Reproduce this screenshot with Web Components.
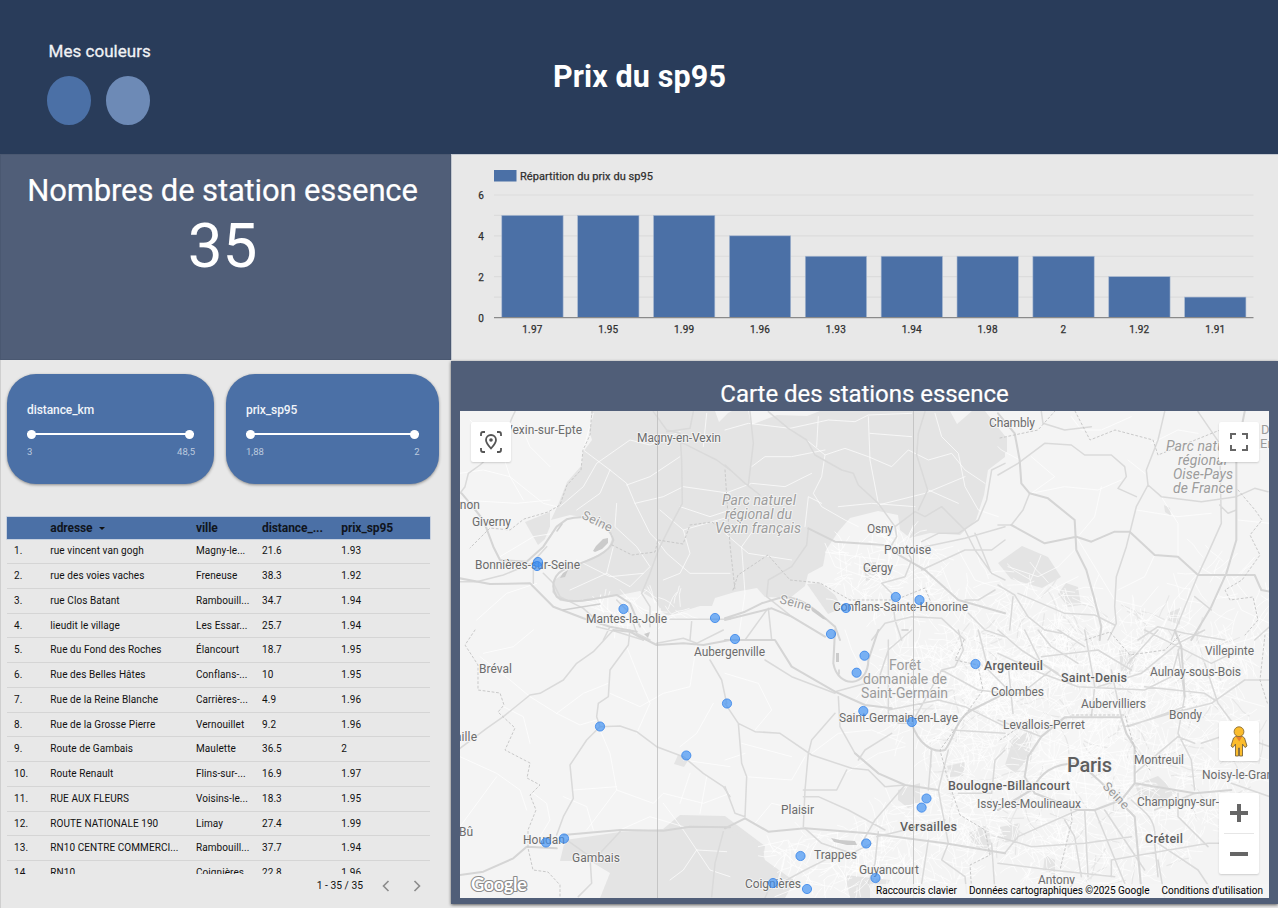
<!DOCTYPE html>
<html lang="fr">
<head>
<meta charset="utf-8">
<title>Prix du sp95</title>
<style>
html,body{margin:0;height:100%;overflow:hidden;background:#e8e8e8;font-family:Roboto,"Liberation Sans",sans-serif}
</style>
</head>
<body>
<fuel-dashboard></fuel-dashboard>
<script>
const define=(name,html)=>customElements.define(name,class extends HTMLElement{
  constructor(){super();this.attachShadow({mode:'open'});}
  connectedCallback(){
    const t=document.createElement('template');
    t.innerHTML=typeof html==='function'?html(this):html;
    this.shadowRoot.replaceChildren(t.content.cloneNode(true));
  }
});
const label=([s,x0,x1,y,size=12,weight=400,fill='#6c6c6c',extra=''])=>
  `<text x="${x0}" y="${y}" textLength="${x1-x0}" font-size="${size}" font-weight="${weight}" fill="${fill}" ${extra}>${s}</text>`;

define('color-swatch',el=>`<style>:host{display:block;width:44.5px;height:49px;border-radius:50%;background:${el.getAttribute('color')}}</style>`);

define('page-header',`<style>
:host{display:grid;grid-template-columns:1fr auto 1fr;height:154px;background:#293c5a;color:#fff}
.left{padding:41px 0 0 46.5px}
.cap{font-size:17px;line-height:20px;padding-left:2px;font-weight:400;-webkit-text-stroke:.3px;color:#f0f2f5;letter-spacing:.04px;white-space:nowrap}
.row{display:flex;gap:14.5px;margin-top:15px}
h1{margin:0;align-self:start;padding:58px 0 0 1px;font-size:30.500px;line-height:37px;font-weight:700;letter-spacing:.12px}
</style>
<div class="left"><div class="cap">Mes couleurs</div><div class="row"><color-swatch color="#4b70a6"></color-swatch><color-swatch color="#6d8ab6"></color-swatch></div></div>
<h1><slot></slot></h1><div></div>`);

define('score-card',el=>`<style>
:host{display:block;box-sizing:border-box;background:#505e78;color:#fff;text-align:center;border:1px solid #4a5871;padding:17px 6px 0 0}
.t{font-size:31px;line-height:38px;white-space:nowrap;letter-spacing:-.14px;-webkit-text-stroke:.2px}
.v{font-size:62px;line-height:72px}
</style><div class="t"><slot></slot></div><div class="v">${el.getAttribute('value')}</div>`);

define('bar-chart',()=>{
  const data=[['1.97',5],['1.95',5],['1.99',5],['1.96',4],['1.93',3],['1.94',3],['1.98',3],['2',3],['1.92',2],['1.91',1]];
  let s='';
  for(let i=1;i<=6;i++)s+=`<path d="M494 ${317.5-i*20.42}H1253.5" stroke="#dcdcdc" stroke-width="1.2"/>`;
  data.forEach(([n,v],i)=>{
    const x=501.8+i*75.87;
    s+=`<rect x="${x}" y="${317.5-v*20.42}" width="61.3" height="${v*20.42}" fill="#4b70a6" stroke="#a9b9d1" stroke-width=".6"/>`;
    s+=`<text x="${x+30.6}" y="332.7" text-anchor="middle" font-size="10" letter-spacing=".15">${n}</text>`;
  });
  [0,2,4,6].forEach(v=>s+=`<text x="481" y="${321.5-v*20.42}" text-anchor="middle" font-size="10">${v}</text>`);
  return `<style>:host{display:block;background:#e8e8e8;border-left:1px solid #c3c8d0;border-top:1px solid #c3c8d0;box-sizing:border-box}svg{display:block;width:826px;height:205px}text{stroke:#303030;stroke-width:.25px}</style>
  <svg viewBox="452 155 826 205" fill="#303030">${s}
  <path d="M494 317.7H1253.5" stroke="#8a8a8a" stroke-width="1.2"/>
  <rect x="494" y="170" width="22.5" height="11.5" fill="#4b70a6"/>${label(['Répartition du prix du sp95',520,653,179.5,11,400,'#303030'])}</svg>`;
});

define('range-filter',el=>`<style>
:host{display:block;box-sizing:border-box;height:110px;border-radius:29px;background:#4b70a6;padding:27px 20px 0;box-shadow:0 1px 3px rgba(0,0,0,.4);color:#f1f4f9}
.n{font-size:12px;line-height:18px;font-weight:500;letter-spacing:-.08px}
.track{display:flex;align-items:center;justify-content:space-between;height:10px;margin-top:10px;background:linear-gradient(#fff,#fff) 0 50%/100% 2px no-repeat}
i{width:9px;height:9px;border-radius:50%;background:#fff}
.v{display:flex;justify-content:space-between;font-size:9.500px;line-height:12px;margin-top:7px;margin-right:-1px;color:#bccadf}
</style><div class="n">${el.getAttribute('name')}</div><div class="track"><i></i><i></i></div><div class="v"><span>${el.getAttribute('min')}</span><span>${el.getAttribute('max')}</span></div>`);

define('station-table',()=>{
  const rows=[['rue vincent van gogh','Magny-le...','21.6','1.93'],['rue des voies vaches','Freneuse','38.3','1.92'],['rue Clos Batant','Rambouill...','34.7','1.94'],['lieudit le village','Les Essar...','25.7','1.94'],['Rue du Fond des Roches','Élancourt','18.7','1.95'],['Rue des Belles Hâtes','Conflans-...','10','1.95'],['Rue de la Reine Blanche','Carrières-...','4.9','1.96'],['Rue de la Grosse Pierre','Vernouillet','9.2','1.96'],['Route de Gambais','Maulette','36.5','2'],['Route Renault','Flins-sur-...','16.9','1.97'],['RUE AUX FLEURS','Voisins-le...','18.3','1.95'],['ROUTE NATIONALE 190','Limay','27.4','1.99'],['RN10 CENTRE COMMERCI...','Rambouill...','37.7','1.94'],['RN10','Coignières','22.8','1.96']];
  return `<style>
:host{display:block;width:423px;color:#111}
.r,.h{display:grid;grid-template-columns:43.3px 145.7px 66px 79.3px 1fr;box-sizing:border-box;white-space:nowrap}
.h{height:22px;background:#4b70a6;font-weight:700;font-size:12px;line-height:22px;box-shadow:0 0 0 .7px #b9c6da;color:#10151d;letter-spacing:-.08px}
.r{height:24.75px;border-bottom:1.3px solid #d5d5d5;font-size:10px;line-height:24px;letter-spacing:.08px}
.r span:first-child{padding-left:7px}
.body{height:334.500px;overflow:hidden;padding-top:.3px}
.foot{display:flex;justify-content:flex-end;align-items:center;font-size:10.3px;line-height:22px;height:22px;padding:1px 7px 0 0}
svg{width:12px;height:12px;fill:none;stroke:#8b8b8b;stroke-width:1.6}
b{display:inline-block;border:3px solid transparent;border-top-color:#111;border-bottom:0;vertical-align:2.5px;margin-left:6px}
</style><div class="h"><span></span><span>adresse<b></b></span><span>ville</span><span>distance_...</span><span>prix_sp95</span></div>
<div class="body">${rows.map((r,i)=>`<div class="r"><span>${i+1}.</span>${r.map(c=>`<span>${c}</span>`).join('')}</div>`).join('')}</div>
<div class="foot"><span>1 - 35 / 35</span><svg style="margin-left:17px" viewBox="0 0 12 12"><path d="M8.5 1 3.500 6l5 5"/></svg><svg style="margin-left:19px" viewBox="0 0 12 12"><path d="M3.500 1 8.500 6l-5 5"/></svg></div>`;
});

define('map-button','<style>:host{display:flex;align-items:center;justify-content:center;width:40px;height:40px;background:#fff;border-radius:2px;box-shadow:0 1px 2px rgba(0,0,0,.16)}</style><slot></slot>');

define('base-map',()=>{
  /* Each road sheet is traced at three times the map scale. */
  const sheets=[
   [450,360,
    'M195 155C170 200 170 240 150 260L90 315 55 340 45 380 30 400M30 665 80 665 160 645 245 610 290 560M250 625V670M280 640 310 670 330 710 400 745 450 790M610 155 650 210 690 220 695 300 697 430 660 500 625 570 600 640 575 700 600 740V800M650 215 720 205 730 155M690 245 760 280 800 300 840 330M660 778H840M440 800 500 815 580 840M500 720 540 760 560 820 600 840M720 840 725 785M460 840 480 800',
    'M35 400 60 430 100 480 130 560 150 600 230 605 280 560 320 500 350 478C430 455 480 500 490 540C480 580 420 600 350 625C310 640 300 680 320 710C350 735 420 720 500 705L540 730 570 800M30 655 120 672 240 670 310 740 400 775 480 800 560 815',
    'M400 270 480 330 530 370 555 430 600 520 620 540M330 440 400 380 440 310 540 240 600 255 690 215M400 270 430 160M480 330 450 400 380 450M530 375 600 350 690 290M555 430 640 410 700 380 840 400M500 430 495 500 560 560 600 620 540 680 470 640 360 690M630 450 700 510 720 580 690 640 640 660M700 510 840 470M30 340 100 330 180 350 280 430 320 440M150 260 180 350 220 420M30 420 200 430 300 420M150 590 250 530 310 520M210 190 240 260 300 320M60 180 130 250M620 540 650 580 720 640 840 640M690 440 780 470 840 450M380 600 480 650 580 640M770 160 760 260M470 640 490 560M80 780 170 700 260 670'],
   [725,360,
    'M0 315 60 370 105 405M75 155 85 250 70 375M130 155 190 205 245 240 270 285 350 330 385 340 400 375 460 430 510 500 515 530 500 555M600 155 580 220 575 285 608 390 580 450M510 500 570 455 600 470 650 440 720 510 750 570 800 640 840 660M840 310 800 330 785 420 760 480 700 520 640 520 590 545M250 505 245 555 200 620 130 660 125 710 200 770M130 745 140 840M60 840 125 750M600 560 720 535 840 500M540 560 560 600 540 650 470 670 500 700 510 780 530 840M440 840 480 790 560 770 650 775 720 840M730 760 780 810 840 830M720 720 760 720 810 690M590 630 720 570 800 570 840 540M750 520 795 630',
    'M0 775 60 755 110 730 160 715C230 700 280 760 330 800L345 840M0 780 140 745 200 770 300 830M250 505 330 545 480 555 530 590 600 630 700 720 840 760',
    'M0 210 70 190 195 205 310 180 390 185 430 165 560 160M245 240 300 285 360 265 430 290 500 320 550 270 610 300 680 280 720 330 780 370M300 285 290 350 265 400 290 440 360 480 400 500M430 170 435 300 460 430M280 170 275 260M0 400 80 370 180 380 260 340M80 320 120 290 200 290 300 270M435 220 560 230M630 160 650 230 700 280 720 380 760 450 820 470M460 435 600 400 720 350M340 440 440 430 570 440M610 390 700 430M40 840 60 700 50 560 100 490M240 500 250 410 290 430M0 520 70 580 200 600M300 550 330 620 420 650 500 680M340 545 350 650 450 740M320 580 480 600M650 620 690 720M700 570 750 660 840 690'],
   [998,360,
    'M0 345 60 310 140 250 220 255 260 285 340 285 380 320 385 350 360 385 415 410M130 155 135 190 200 210 280 200M500 155 480 240 445 330 450 375 415 440 395 520 385 560 355 650 350 740 355 790 330 840M450 375 490 410 610 425 715 410 770 385 810 395M0 495H40L75 450 95 400M600 155 665 250 670 490 630 580 600 645 520 840M0 675 50 705 90 770 140 810 190 820M60 700 200 760 290 765 350 795M420 840 480 800 560 820 680 840M665 435 690 460 715 450M45 710 35 810M770 840 815 800M590 710 640 750',
    'M0 160 50 220 65 300 70 370 95 400 150 415 230 480 235 570 265 630 290 720 310 800 305 840M40 495 140 550 235 530 280 545 350 515 395 515 470 585 540 590 600 645 770 645 790 690 815 695M740 155 715 280V540L685 640 640 740 580 840',
    'M220 170 250 210 310 210 400 170M100 400 200 380 300 390 370 360M65 300 10 270 0 260M310 380 290 470 240 530M415 450 540 470 640 460M460 250 540 210 600 220M490 410 540 490 540 590M230 570 180 620 120 650 30 620M235 530 290 620 350 720 430 740 480 680M470 585 440 650 360 690M720 480 815 490M600 640 530 720 480 840M240 650 160 690 100 730M680 640 730 750 815 790M390 300 440 340M100 290 170 350 100 400M715 290 815 260M660 260 715 290'],
   [450,630,
    'M490 0 430 65 380 100 340 150 270 190 240 195 160 260 110 295 30 355M540 0 535 45 480 120 475 200 445 220 440 260 450 290 410 330 360 405 370 505 340 560 320 615M450 290 510 288 560 305 620 350 700 380 760 430 820 470 840 500M780 90 815 150 830 220M350 630 420 680 425 760 385 800M440 680 510 605M820 605 795 700 785 800M540 5 580 30M620 40 700 25 740 40 820 0',
    'M490 0 540 5 620 45 700 40 760 45 840 30M30 735 100 725 190 685 230 650 320 655M340 615 510 600 640 602 720 590 840 592',
    'M100 70 190 50 250 0M90 80 180 150 240 200 320 250 390 285 440 270M320 250 400 190 475 160M530 50 570 150 600 220 560 310M480 190 570 230 640 190 720 170 740 40M30 380 140 430 210 480 230 540M30 590 140 440M450 300 480 370 500 480 610 520 640 490 760 520 840 490M370 480 500 470M500 480 410 600M240 340 220 260 160 230M250 490 290 520 300 570 270 620M640 520 700 600 740 660 830 665M740 660 700 720 660 750M740 660 780 720 840 740M510 600 600 560 700 590M690 350 740 310 790 220M700 390 840 410M770 440 750 550M720 430 690 520M340 500 410 530 430 600'],
   [725,630,
    'M120 90 200 140 330 190M340 200 345 290 390 370 460 430M0 220 40 280 90 305 165 310 260 375 380 415 430 420 480 470 540 465M330 250 260 330 250 370 240 480 235 590M235 480H335L365 420M235 500H280L370 540 480 600M40 280 50 400 65 440 60 560M0 470 30 550 60 560M540 465 450 570 410 640M240 595 290 640 380 670 440 640M490 30V250L520 280H560L650 120M670 360 640 480 670 640M620 360 610 480M680 300 840 310M700 0 715 60 690 110 650 120M760 0 790 120 840 170M670 640 650 690 720 740 725 790M400 390 420 360 500 310M120 804 130 780 240 720 340 670M330 185 460 150 490 60 560 0M490 240 640 210 720 230 840 290M650 120 760 180 840 190M460 605 450 700 430 760M610 630 590 760M800 640 810 790M840 360 810 390 800 490 700 490M455 620 540 600 660 570',
    'M0 30H150L200 110 330 185 420 225 500 235M390 370 460 430 540 465 640 480M0 595 60 565 130 605 240 595 430 610 660 640 840 670M560 280C580 340 620 370 660 360C690 320 690 270 740 240L840 190M330 0 325 100C340 180 430 170 430 90L460 0',
    'M0 130 100 160 140 240 90 300M60 440 200 450 240 380M50 340 200 380M0 390 60 370M360 0 380 60 420 140 480 150M260 370 340 310 440 300 540 340M360 430 460 370 540 350M90 580 140 520 230 540M100 650 190 630 230 700 200 760M150 800 250 760 320 770M480 470 500 520 580 590M540 560 700 550 840 560M630 480 740 530 840 500M610 90 710 160 820 110M700 130 740 60 840 50M490 730 600 680 690 700M540 610 560 700 500 790'],
   [998,630,
    'M0 70 130 130 240 170 440 180 520 140 545 50M260 0 290 170 280 262M340 120 370 262M380 290 520 250 640 220 740 150 815 150M440 0 540 50 640 100 700 70M300 170 430 130 540 40 620 0M540 60 560 200 540 310 580 390 590 480M410 430 540 320 590 340M390 290 560 230M400 510C430 540 480 560 470 640L480 740M260 540 270 740M290 540 380 760M320 540 440 720M240 540 60 620 20 670M0 620 100 650 260 640 400 620M340 690 630 640 700 640M480 640 600 720 640 780M0 0 70 60 180 130M80 0 130 100 220 160M30 100 45 250M0 190 70 190 160 120M130 80 300 60 400 120M390 100 480 0M620 100 660 220 720 300M610 340 700 310 815 350M120 0 160 50 240 100M250 740 230 620 200 570M0 700 160 720 350 740M470 540 590 490M0 270 130 320M440 170 620 190 650 210M180 0 260 50M540 490 540 560 630 650M700 460 815 500M340 740 340 690M480 690 500 804',
    'M200 262H370L385 310 410 350V460L370 510 290 540H240L110 490 80 440 90 380 130 320 200 262M430 780 410 560C350 500 300 440 240 400C160 400 130 430 100 480L0 540M410 460 590 490 700 480M530 0 550 50 560 200',
    'M130 320 400 420M240 270 270 540M90 400 400 360M160 500 380 310M310 270 330 520M120 440 400 480M480 60 620 180 800 230M600 50 600 250M440 220 520 400 700 430M640 60 780 20M440 100 420 250']];
  const road=(k,c,w,o=1)=>sheets.map(s=>`<g transform="translate(${s[0]} ${s[1]}) scale(.33333)" opacity="${o}"><path d="${s[k]}" stroke="${c}" stroke-width="${w}"/></g>`).join('');
  /* Dense residential streets, seeded so that every load is the same. */
  let seed=7;const rnd=()=>(seed=(seed*16807)%2147483647)/2147483647;
  const net=(cx,cy,rx,ry,n,len)=>{let d='';for(let i=0;i<n;i++){const a=rnd()*6.283,q=Math.sqrt(rnd());let x=cx+Math.cos(a)*rx*q,y=cy+Math.sin(a)*ry*q,t=rnd()*6.283;d+=`M${x.toFixed(1)} ${y.toFixed(1)}`;for(let j=0;j<3;j++){t+=(rnd()-.5)*.7;x+=Math.cos(t)*len;y+=Math.sin(t)*len;d+=`L${x.toFixed(1)} ${y.toFixed(1)}`}}return d};
  const grey=net(1090,740,180,150,130,8);
  const streets=net(1090,760,165,125,1200,6)+net(1090,665,160,55,450,6)+net(890,575,60,45,140,6)+net(940,690,75,60,190,7)+net(840,860,70,30,130,6)+net(930,840,70,50,130,6)+net(640,612,45,14,45,6)+net(1220,620,60,70,70,8)+net(1020,610,80,40,80,9);
  const G='#9c9c9c',D='#5f5f5f';
  const names=[['Vexin-sur-Epte',505,582,434],['Magny-en-Vexin',637,721,442],['Vernon',442,480,509],['Giverny',472,511,526],['Bonnières-sur-Seine',475,580,569],['Mantes-la-Jolie',586,667,623],
  ['Parc naturel',722,796,504.7,14,400,G,'font-style="italic"'],['régional du',725,792,518.7,14,400,G,'font-style="italic"'],['Vexin français',715,801,532.7,14,400,G,'font-style="italic"'],
  ['Osny',867,893,533],['Pontoise',884,931,554],['Cergy',863,893,572],['Conflans-Sainte-Honorine',833,968,611],['Chambly',989,1035,427],
  ['Parc naturel',1166,1240,451,14,400,G,'font-style="italic"'],['régional',1178,1227,465,14,400,G,'font-style="italic"'],['Oise-Pays',1173,1233,479,14,400,G,'font-style="italic"'],['de France',1173,1233,493,14,400,G,'font-style="italic"'],
  ['D',1261,1270,434,13,400,G],['Er',1260,1272,448,13,400,G],
  ['Bréval',479,512,673],['aille',455,477,741],['Bû',459,473,836],['Houdan',523,565,844],['Gambais',572,620,862],['Aubergenville',694,765,656],
  ['Forêt',889,921,670,14,400,G],['domaniale de',863,947,684,14,400,G],['Saint-Germain',861,948,698,14,400,G],['Saint-Germain-en-Laye',839,958,722],
  ['Plaisir',781,814,814],['Versailles',900,957,830.5,12.5,500,D],['Trappes',814,857,858.5],['Guyancourt',859,919,874],['Coignières',745,801,888],
  ['Argenteuil',984,1043,670,12.5,500,D],['Colombes',991,1044,696],['Saint-Denis',1061,1127,682,12.5,500,D],['Aubervilliers',1081,1146,708],['Bondy',1169,1202,719],['Villepinte',1205,1254,655],['Aulnay-sous-Bois',1150,1241,676],['Levallois-Perret',1003,1085,729],['Paris',1067,1112,772,20,500,D],['Montreuil',1134,1184,764],['Boulogne-Billancourt',948,1070,789.5,12.5,500,D],['Noisy-le-Grand',1202,1280,779],['Issy-les-Moulineaux',977,1081,808],['Champigny-sur-',1137,1219,806],['Créteil',1145,1183,843,12.5,500,D],['Antony',1038,1075,884]];
  const river=(x,y,r)=>`<text transform="translate(${x} ${y}) rotate(${r})" font-size="12.500" textLength="32" fill="#9a9a9a">Seine</text>`;
  const dots=[[538,562],[537,566],[623.5,609],[715,618],[735,639],[727,703.5],[600,726.5],[686.3,755.5],[546,842.5],[564,838.5],[831,634],[846,608],[895.8,597],[919.5,600],[864.5,655.7],[856.6,672.7],[975.5,664],[863.3,711],[911.8,722],[926.5,798.5],[921.6,807.6],[866.2,843.5],[800.5,856],[773,883],[807,889],[875.5,878]];
  return `<style>:host{display:block}svg{display:block;width:809px;height:487px}</style>
<svg viewBox="460 411 809 487"><rect x="460" y="411" width="809" height="487" fill="#f4f4f4"/>
<g fill="#e4e4e4">
<path d="M592 411 589 430 592 440 583 452 582 465 567 482 558 505 551 520 570 515 600 520 613 535 608 550 570 568 555 580 552 592 560 601 582 602 615 596 640 591 655 600 662 612 668 616 700 606 712 606 715 598 735 592 757 588 765 597 790 598 805 586 808 574 823 566 826 550 838 532 850 518 878 511 898 515 900 530 910 538 930 533 960 535 976 520 984 495 988 470 1005 457 1005 436 985 411Z"/>
<path d="M748 411 751 425 777 415 807 416 820 411Z" fill="#f4f4f4"/><path d="M715 411 719 422 728 413 732 411Z" fill="#f4f4f4"/><path d="M525 522 550 512 550 535 538 545Z"/><path d="M950 411 957 424 972 411Z" fill="#f4f4f4"/>
<path d="M551 524 566 517 592 519 606 530 609 540 600 548 575 562 552 574 541 567 538 556Z" fill="#f4f4f4"/>
<path d="M565 840 620 832 663 829 680 815 725 816 765 846 762 868 795 880 785 898H600L610 873 590 861 560 861Z"/>
<path d="M725 828 760 844 765 860 790 878 783 898H725Z"/>
<path d="M998 563 1022 546 1048 557 1061 577 1042 588 1011 579Z"/><path d="M1066 583 1078 587 1081 605 1068 607 1058 594Z"/><path d="M1164 505 1170 508 1171 516 1165 512Z"/><path d="M998 437H1007V452L998 457Z"/><path d="M807 584 820 583 835 595 842 608 828 614Z"/>
<path d="M1013 740 1035 728 1027 760 1015 773 1005 765Z"/><path d="M1135 785 1158 776 1176 793 1160 803 1140 798Z"/><path d="M898 790 920 783 920 803 908 808 898 800Z"/><path d="M1000 827 1020 823 1017 840 1003 843ZM947 766 965 762 963 776 950 777ZM968 833 988 824 993 855 975 844ZM863 563 876 562 878 577 866 581ZM1119 650 1138 652 1130 675 1121 671ZM845 875 890 880 880 898H850ZM1045 855 1055 860 1055 875 1043 870ZM1168 613 1180 608 1180 625 1167 620ZM678 755 689 759 684 767 674 764Z"/>
<path d="M1025 760 1070 717H1122L1135 745V785L1095 810H1078Z" fill="#f6f6f6"/></g>
<g fill="none" stroke-linejoin="round" stroke-linecap="round">
<path d="${grey}" stroke="#e7e7e7" stroke-width="1.2"/>
<path d="${streets}" stroke="#fff" stroke-width=".9" opacity=".75"/>
${road(4,'#fff',3,.7)}${road(2,'#dadada',4.6)}${road(3,'#d5d5d5',6.2)}
<g stroke="#c9c9c9" stroke-dasharray="2 2.500" stroke-width="1"><path d="M592 411 590 435 583 450 581 470 567 485 560 505 548 512 524 519 510 530 490 528 470 548M612 545 632 555 655 552 658 540 683 544 690 525 712 522 720 528M475 630 465 645 478 665 478 690 500 693 504 705 498 712 515 728 505 750 530 763 527 778 540 785 530 795 536 810 528 830 528 848 533 870 548 872 560 885V898M733 590 738 575 768 555 790 580 820 583 850 600 895 600 925 588 932 605M725 470 730 545 735 590M1000 438 1038 430 1055 411M1075 411 1090 440 1115 430 1153 440 1158 455 1220 430M1238 490 1255 510 1262 520 1250 535 1260 555 1242 580 1225 590 1230 600 1253 597 1258 620 1245 635M1085 640 1110 632 1130 655 1165 650 1180 635M964 640 955 660 978 665 983 690 940 750 948 780 960 815 985 830 990 855 970 865 972 895M1265 635 1260 680 1268 705M1072 715H1125L1135 750 1150 770M1000 740 1030 720M1070 800 1072 820 1060 870"/></g>
<g fill="#cbcbcb"><path d="M593 551 596 546 603 539 608 538 608 543 602 549 595 552ZM560 578 563 573 568 570 565 577ZM810 606 819 612 827 620 823 619 812 611ZM831 838 840 840 855 841 857 845 847 845 834 842ZM644 634 650 632 648 638ZM836 653H839V662H836Z"/></g><path d="M563 610 600 604M557 531 562 524M839 670V674M902 630H908" stroke="#d0d0d0" stroke-width="1.500"/>
</g>
<g stroke="#f6f6f6" stroke-width="2" stroke-opacity=".8" paint-order="stroke" stroke-linejoin="round">${names.map(label).join('')}${river(581,518,26)}${river(779,603,15)}${river(1102,787,46)}</g>
<path d="M657.500 411V898M913.500 411V898" stroke="#bcbcbc" stroke-width=".8"/>
<g fill="#3d8ff2" fill-opacity=".68" stroke="#2f7fe8" stroke-opacity=".75">${dots.map(d=>`<circle cx="${d[0]}" cy="${d[1]}" r="4.600"/>`).join('')}</g>
<rect x="870" y="884" width="399" height="14" fill="#f5f5f5" opacity=".75"/>
${label(['Raccourcis clavier',876,957,893.7,10,400,'#000'])}${label(['Données cartographiques ©2025 Google',969,1149.5,893.7,10,400,'#000'])}${label(["Conditions d'utilisation",1161.5,1263,893.7,10,400,'#000'])}
<text x="471" y="890.500" font-size="18.500" font-family="Lato,sans-serif" font-weight="700" textLength="56" fill="#fff" stroke="#8b8b8b" stroke-width="2.200" paint-order="stroke" stroke-linejoin="round">Google</text>
</svg>`;
});

define('station-map',`<style>
:host{display:block;box-sizing:border-box;background:#505e78;height:543px;padding:18px 9px 0;margin-top:1px;box-shadow:0 1px 3px rgba(0,0,0,.6)}
h2{margin:0;height:32px;font-size:24px;line-height:30px;font-weight:400;color:#fff;text-align:center;letter-spacing:-.05px;-webkit-text-stroke:.2px}
.map{position:relative;width:809px;height:487px;overflow:hidden}
map-button{position:absolute}
.locate{left:11px;top:11px}.full{right:10.500px;top:11px}.peg{right:10.500px;top:310px}
.zoom{right:10.500px;top:382px;width:40px;height:81px}
svg{display:block}
</style><h2><slot></slot></h2><div class="map"><base-map></base-map>
<map-button class="locate"><svg width="24" height="24" viewBox="0 0 24 24" fill="none" stroke="#555" stroke-width="1.800"><path d="M2 6V4Q2 2 4 2H6M18 2H20Q22 2 22 4V6M22 18V20Q22 22 20 22H18M6 22H4Q2 22 2 20V18"/><path d="M12 18.500C8.500 14.700 7 12.500 7 10A5 5 0 0 1 17 10C17 12.500 15.500 14.700 12 18.500Z"/><circle cx="12" cy="10" r="1.800" fill="#555" stroke="none"/></svg></map-button>
<map-button class="full"><svg width="18" height="18" viewBox="0 0 18 18" fill="none" stroke="#666" stroke-width="2"><path d="M1 6V1H6M12 1H17V6M17 12V17H12M6 17H1V12"/></svg></map-button>
<map-button class="peg"><svg width="18" height="31" viewBox="0 0 18 31"><path d="M5.500 10.500 3.500 12 1 20 3 21.500 5.500 18V30H8.500V22H9.500V30H12.500V18L15 21.500 17 20 14.500 12 12.500 10.500Z" fill="#fbbc2c" stroke="#79643c" stroke-width=".9"/><path d="M5.800 10.500H12.200L9.200 15.500Z" fill="#e8802d"/><circle cx="9" cy="5.700" r="4.900" fill="#fbbc2c" stroke="#8a6d35" stroke-width=".9"/></svg></map-button>
<map-button class="zoom"><svg width="30" height="81" viewBox="0 0 30 81"><path d="M6 20H24M15 11V29M6 61H24" stroke="#666" stroke-width="4"/><path d="M0 40.500H30" stroke="#e6e6e6"/></svg></map-button>
</div>`);

define('fuel-dashboard',`<style>
:host{display:grid;grid-template-rows:154px 206px 548px;width:1278px;height:908px}
.top,.main{display:grid;grid-template-columns:451px 827px}
.left{box-sizing:border-box;padding:14px 0 0 6px;border-left:1px solid #cfcfcf;background:#e8e8e8}
.filters{display:grid;grid-template-columns:207px 212.500px;gap:12px}
station-table{margin-top:33px}
</style>
<page-header>Prix du sp95</page-header>
<div class="top"><score-card value="35">Nombres de station essence</score-card><bar-chart></bar-chart></div>
<div class="main"><div class="left"><div class="filters"><range-filter name="distance_km" min="3" max="48,5"></range-filter><range-filter name="prix_sp95" min="1,88" max="2"></range-filter></div><station-table></station-table></div>
<station-map>Carte des stations essence</station-map></div>`);
</script>
</body>
</html>
